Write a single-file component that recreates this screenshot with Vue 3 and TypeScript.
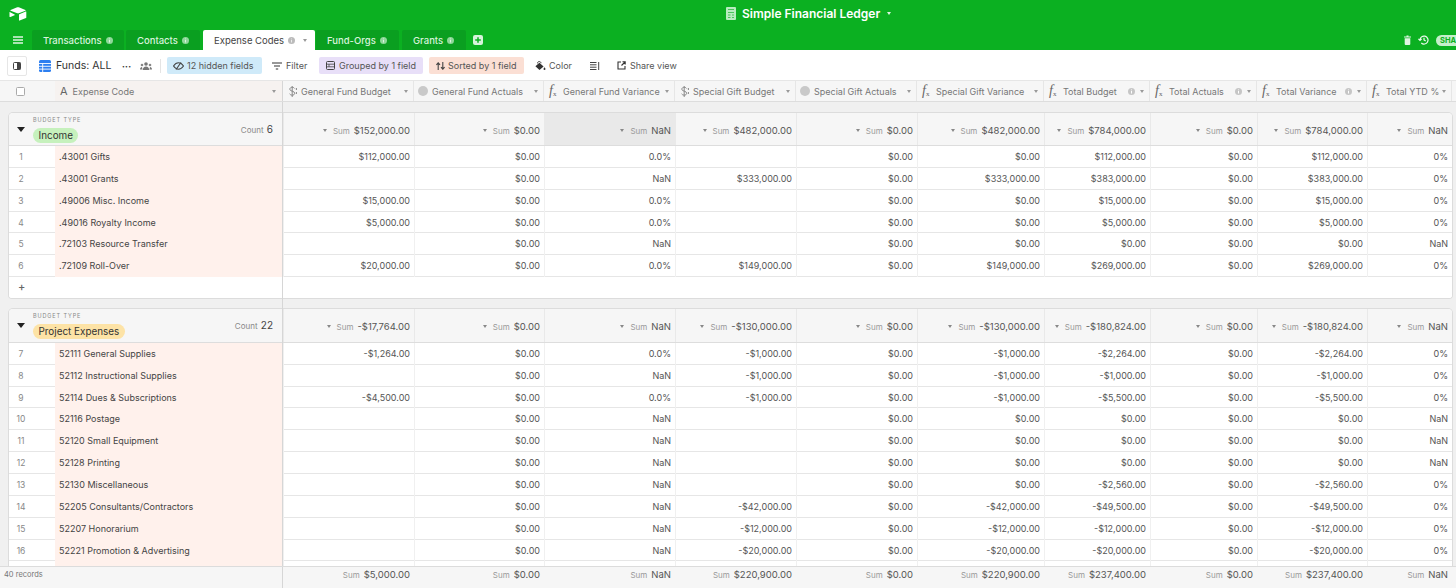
<script setup lang="ts">
type Icon = 'money' | 'circle' | 'fx'
interface Col { name: string; icon: Icon; info?: boolean }
interface Row { n: number; code: string; v: string[] }
interface Group { label: string; tone: string; count: number; sums: string[]; rows: Row[]; add: boolean }

const tabs = [
  { name: 'Transactions', w: 92 },
  { name: 'Contacts', w: 74, gap: 3 },
  { name: 'Expense Codes', w: 112, active: true, gap: 1 },
  { name: 'Fund-Orgs', w: 83, gap: 3 },
  { name: 'Grants', w: 64 }
]

const cols: Col[] = [
  { name: 'General Fund Budget', icon: 'money' },
  { name: 'General Fund Actuals', icon: 'circle' },
  { name: 'General Fund Variance', icon: 'fx' },
  { name: 'Special Gift Budget', icon: 'money' },
  { name: 'Special Gift Actuals', icon: 'circle' },
  { name: 'Special Gift Variance', icon: 'fx' },
  { name: 'Total Budget', icon: 'fx', info: true },
  { name: 'Total Actuals', icon: 'fx', info: true },
  { name: 'Total Variance', icon: 'fx', info: true },
  { name: 'Total YTD %', icon: 'fx' }
]

const Z = '$0.00'
function r(n: number, code: string, a: string, c: string, d: string, e: string, f: string, g: string, h: string): Row {
  return { n, code, v: [a, Z, c, d, Z, e, f, Z, g, h] }
}

const groups: Group[] = [
  {
    label: 'Income', tone: 'green', count: 6, add: true,
    sums: ['$152,000.00', Z, 'NaN', '$482,000.00', Z, '$482,000.00', '$784,000.00', Z, '$784,000.00', 'NaN'],
    rows: [
      r(1, '.43001 Gifts', '$112,000.00', '0.0%', '', Z, '$112,000.00', '$112,000.00', '0%'),
      r(2, '.43001 Grants', '', 'NaN', '$333,000.00', '$333,000.00', '$383,000.00', '$383,000.00', '0%'),
      r(3, '.49006 Misc. Income', '$15,000.00', '0.0%', '', Z, '$15,000.00', '$15,000.00', '0%'),
      r(4, '.49016 Royalty Income', '$5,000.00', '0.0%', '', Z, '$5,000.00', '$5,000.00', '0%'),
      r(5, '.72103 Resource Transfer', '', 'NaN', '', Z, Z, Z, 'NaN'),
      r(6, '.72109 Roll-Over', '$20,000.00', '0.0%', '$149,000.00', '$149,000.00', '$269,000.00', '$269,000.00', '0%')
    ]
  },
  {
    label: 'Project Expenses', tone: 'yellow', count: 22, add: false,
    sums: ['-$17,764.00', Z, 'NaN', '-$130,000.00', Z, '-$130,000.00', '-$180,824.00', Z, '-$180,824.00', 'NaN'],
    rows: [
      r(7, '52111 General Supplies', '-$1,264.00', '0.0%', '-$1,000.00', '-$1,000.00', '-$2,264.00', '-$2,264.00', '0%'),
      r(8, '52112 Instructional Supplies', '', 'NaN', '-$1,000.00', '-$1,000.00', '-$1,000.00', '-$1,000.00', '0%'),
      r(9, '52114 Dues & Subscriptions', '-$4,500.00', '0.0%', '-$1,000.00', '-$1,000.00', '-$5,500.00', '-$5,500.00', '0%'),
      r(10, '52116 Postage', '', 'NaN', '', Z, Z, Z, 'NaN'),
      r(11, '52120 Small Equipment', '', 'NaN', '', Z, Z, Z, 'NaN'),
      r(12, '52128 Printing', '', 'NaN', '', Z, Z, Z, 'NaN'),
      r(13, '52130 Miscellaneous', '', 'NaN', '', Z, '-$2,560.00', '-$2,560.00', '0%'),
      r(14, '52205 Consultants/Contractors', '', 'NaN', '-$42,000.00', '-$42,000.00', '-$49,500.00', '-$49,500.00', '0%'),
      r(15, '52207 Honorarium', '', 'NaN', '-$12,000.00', '-$12,000.00', '-$12,000.00', '-$12,000.00', '0%'),
      r(16, '52221 Promotion & Advertising', '', 'NaN', '-$20,000.00', '-$20,000.00', '-$20,000.00', '-$20,000.00', '0%'),
      { n: 17, code: '', v: ['', '', '', '', '', '', '', '', '', ''] }
    ]
  }
]

const totals = ['$5,000.00', Z, 'NaN', '$220,900.00', Z, '$220,900.00', '$237,400.00', Z, '$237,400.00', 'NaN']
</script>

<template>
  <div class="app">
    <header class="top">
      <div class="top-row">
        <svg class="logo" width="18" height="14" viewBox="0 0 18 14">
          <path d="M8.200.3 1.600 2.900c-.4.200-.4.600 0 .8l6.700 2.600c.5.200 1 .2 1.500 0l6.600-2.600c.4-.2.4-.6 0-.8L9.800.3c-.5-.2-1.100-.2-1.600 0z" fill="#fff" />
          <path d="M10 7.600v5.600c0 .3.300.5.600.4l6.400-2.600c.2-.1.300-.3.300-.4V5c0-.3-.3-.5-.6-.4l-6.400 2.600c-.2.100-.3.200-.3.400z" fill="#fff" />
          <path d="M.7 5 5.600 7.600c.3.100.3.400 0 .6L1.400 10c-.4.200-.9-.1-.9-.5V5.200c0-.2.100-.3.200-.2z" fill="#fff" />
        </svg>
        <div class="title">
          <svg width="10" height="13" viewBox="0 0 10 13">
            <rect width="10" height="13" rx="1" fill="#b8ecc0" />
            <path d="M2 2.500h6M2 5.500h6M2 8h2.500M2 10.500h2.500M6 8h2M6 10.500h2" stroke="#3cbf4e" stroke-width=".9" />
          </svg>
          <span>Simple Financial Ledger</span>
          <i class="caret white"></i>
        </div>
      </div>
      <div class="tab-row">
        <svg class="burger" width="10" height="8" viewBox="0 0 10 8">
          <path d="M0 1h10M0 4h10M0 7h10" stroke="#dff5e2" stroke-width="1.300" />
        </svg>
        <div
          v-for="t in tabs"
          :key="t.name"
          class="tab"
          :class="{ active: t.active }"
          :style="{ width: t.w + 'px', marginRight: (t.gap ?? 2) + 'px' }"
        >
          <span>{{ t.name }}</span>
          <svg class="info" width="7" height="7" viewBox="0 0 7 7">
            <circle cx="3.500" cy="3.500" r="3.500" fill="currentColor" />
            <path d="M3.500 1.500v.8M3.500 3v2.500" stroke="#fff" stroke-opacity=".7" stroke-width="1" />
          </svg>
          <i v-if="t.active" class="caret"></i>
        </div>
        <svg class="plus" width="10" height="10" viewBox="0 0 10 10">
          <rect width="10" height="10" rx="2" fill="#d6f3da" />
          <path d="M5 2.200v5.600M2.200 5h5.600" stroke="#0bb021" stroke-width="1.500" />
        </svg>
        <div class="top-actions">
          <svg width="7" height="10" viewBox="0 0 7 10">
            <path d="M2.500.5h2v1H7v1H0v-1h2.500zM.7 3.300h5.600V9a1 1 0 0 1-1 1H1.700a1 1 0 0 1-1-1z" fill="#dff5e2" />
          </svg>
          <svg class="history" width="11" height="10" viewBox="0 0 11 10">
            <path d="M2 5a4 4 0 1 1 1.300 3M.4 3.800 2 5.400l1.600-1.600M6 2.800V5l1.700 1" fill="none" stroke="#eefaf0" stroke-width="1.200" />
          </svg>
          <span class="share">SHA</span>
        </div>
      </div>
    </header>

    <div class="toolbar">
      <button class="side-btn">
        <svg width="8" height="8" viewBox="0 0 8 8">
          <rect x=".5" y=".5" width="7" height="7" rx="1" fill="none" stroke="#444" />
          <rect x="4" y=".5" width="3.500" height="7" fill="#444" />
        </svg>
      </button>
      <svg class="view-icon" width="12" height="12" viewBox="0 0 12 12">
        <rect width="12" height="12" rx="1.500" fill="#2d7ff0" />
        <path d="M0 3.500h12M0 6.300h12M0 9.100h12M3.700 3.500V12" stroke="#fff" stroke-width=".9" />
      </svg>
      <span class="view-name">Funds: ALL</span>
      <span class="dots">•••</span>
      <svg class="people" width="12" height="8" viewBox="0 0 12 8">
        <circle cx="6" cy="2" r="1.800" fill="#777" />
        <circle cx="2" cy="3" r="1.300" fill="#888" />
        <circle cx="10" cy="3" r="1.300" fill="#888" />
        <path d="M2.800 8c0-2.200 1.300-3.400 3.200-3.400S9.200 5.800 9.200 8zM0 7.500c0-1.500.8-2.500 2-2.500l.5 2.500zM12 7.500c0-1.500-.8-2.500-2-2.500l-.5 2.500z" fill="#777" />
      </svg>
      <span class="divider"></span>
      <span class="pill blue">
        <svg width="11" height="8" viewBox="0 0 11 8">
          <path d="M.5 4C2 1.800 3.600.8 5.500.8S9 1.800 10.500 4C9 6.200 7.400 7.200 5.500 7.200S2 6.200.5 4z" fill="none" stroke="#444" stroke-width="1.100" />
          <path d="M3 7.500 8 .5" stroke="#444" stroke-width="1.100" />
        </svg>
        12 hidden fields
      </span>
      <span class="plain filter">
        <svg width="10" height="8" viewBox="0 0 10 8">
          <path d="M0 1h10M2 4h6M3.800 7h2.400" stroke="#333" stroke-width="1.200" />
        </svg>
        Filter
      </span>
      <span class="pill purple">
        <svg width="9" height="9" viewBox="0 0 9 9">
          <rect x=".5" y=".5" width="8" height="8" rx="1" fill="none" stroke="#444" />
          <path d="M.5 3.200h8M.5 5.800h8M3 3.200v2.600" stroke="#444" stroke-width=".8" />
        </svg>
        Grouped by 1 field
      </span>
      <span class="pill salmon">
        <svg width="9" height="8" viewBox="0 0 9 8">
          <path d="M2.200 8V1M.4 2.800l1.800-2 1.800 2M6.800 0v7M5 5.200l1.800 2 1.800-2" fill="none" stroke="#444" stroke-width="1.100" />
        </svg>
        Sorted by 1 field
      </span>
      <span class="plain color">
        <svg width="11" height="10" viewBox="0 0 11 10">
          <path d="M2.500 2.400C2.500 1.200 3.200.5 4.200.5S6 1.200 6 2.200" fill="none" stroke="#333" stroke-width=".9" />
          <path d="M4.400 1.800 8.600 5.600 4.500 9 .4 5.300zM9.500 6.200c-.6.800-1 1.300-1 1.800a1 1 0 0 0 2 0c0-.5-.4-1-1-1.800z" fill="#333" />
        </svg>
        Color
      </span>
      <svg class="density" width="10" height="8" viewBox="0 0 10 8">
        <path d="M0 .5h6.500M0 2.800h6.500M0 5.200h6.500M0 7.500h6.500M8.700 0v8" stroke="#444" stroke-width="1" />
      </svg>
      <span class="plain share-view">
        <svg width="9" height="9" viewBox="0 0 9 9">
          <path d="M4 1H1v7h7V5M4.500 4.500 8 1M5.500 .8H8.200V3.500" fill="none" stroke="#333" stroke-width="1.100" />
        </svg>
        Share view
      </span>
    </div>

    <div class="cols-head grid-outer">
      <div class="head-main">
        <span class="check"></span>
        <span class="head-a">A</span>
        <span>Expense Code</span>
        <i class="caret"></i>
      </div>
      <div v-for="c in cols" :key="c.name" class="head-cell">
        <span v-if="c.icon === 'fx'" class="fx">f<sub>x</sub></span>
        <svg v-else-if="c.icon === 'money'" class="money" width="8" height="11" viewBox="0 0 8 11">
          <path d="M5.600 2.500C5.200 1.700 4.400 1.300 3.200 1.300 1.900 1.300.8 2 .8 3.200c0 2.500 4.900 1.500 4.900 4 0 1.200-1.100 2-2.500 2-1.200 0-2-.5-2.600-1.400M3.200 0v11" fill="none" stroke="#888" stroke-width="1" />
          <path d="M7.400 2v2M7.400 6v2" stroke="#888" stroke-width="1" />
        </svg>
        <span v-else class="rollup"></span>
        <span class="head-name">{{ c.name }}</span>
        <svg v-if="c.info" class="info head-info" width="7" height="7" viewBox="0 0 7 7">
          <circle cx="3.500" cy="3.500" r="3.500" fill="currentColor" />
          <path d="M3.500 1.500v.8M3.500 3v2.500" stroke="#fff" stroke-width="1" />
        </svg>
        <i class="caret"></i>
      </div>
    </div>

    <main class="data">
      <span class="freeze-line"></span>
      <section v-for="g in groups" :key="g.label" class="card">
        <div class="card-grid group-head">
          <div class="group-main">
            <i class="group-arrow"></i>
            <div class="group-label">
              <small>BUDGET TYPE</small>
              <span class="tag" :class="g.tone">{{ g.label }}</span>
            </div>
            <span class="count">Count <b>{{ g.count }}</b></span>
          </div>
          <div v-for="(s, i) in g.sums" :key="i" class="sum-cell" :class="{ hot: i === 2 && g.tone === 'green' }">
            <i class="caret"></i>
            <span class="sum">Sum</span>
            <span class="sum-val">{{ s }}</span>
          </div>
        </div>
        <div v-for="row in g.rows" :key="row.n" class="card-grid row">
          <div class="main-cell">
            <span class="num">{{ row.code ? row.n : '' }}</span>
            <span class="code">{{ row.code }}</span>
          </div>
          <div v-for="(v, i) in row.v" :key="i" class="val">{{ v }}</div>
        </div>
        <div v-if="g.add" class="card-grid add-row">
          <span class="add">+</span>
        </div>
      </section>
    </main>

    <footer class="foot grid-outer">
      <div class="records">40 records</div>
      <div v-for="(t, i) in totals" :key="i" class="foot-cell">
        <span class="sum">Sum</span>
        <span class="sum-val">{{ t }}</span>
      </div>
    </footer>
  </div>
</template>

<style>
html, body { margin: 0; overflow: hidden; }
</style>

<style scoped>
.app {
  width: 1456px;
  height: 588px;
  display: flex;
  flex-direction: column;
  overflow: hidden;
  font-family: Inter, "Liberation Sans", sans-serif;
  font-size: 9px;
  color: #444;
  background: #fff;
}
.caret {
  display: inline-block;
  width: 0;
  height: 0;
  border-left: 2.5px solid transparent;
  border-right: 2.5px solid transparent;
  border-top: 3px solid #999;
  flex: none;
}
.caret.white { border-top-color: #dff5e2; }

.top { height: 50px; flex: none; background: #0bb021; display: flex; flex-direction: column; }
.top-row { height: 30px; display: flex; align-items: center; padding-left: 9px; padding-bottom: 3px; box-sizing: border-box; }
.logo { flex: none; }
.title { margin-left: 699px; display: flex; align-items: center; gap: 6px; color: #fff; font-size: 12px; font-weight: 600; }
.title .caret { margin-left: 1px; }
.tab-row { height: 20px; display: flex; align-items: stretch; color: #e4f7e7; }
.burger { align-self: center; margin-left: 13px; margin-right: 9px; flex: none; }
.tab {
  box-sizing: border-box;
  display: flex;
  align-items: center;
  gap: 4px;
  padding-left: 11px;
  font-size: 9.500px;
  font-weight: 500;
  background: #0a9f20;
  border-radius: 2px 2px 0 0;
  color: #d9f3dd;
}
.tab .info { color: #8fd89a; }
.tab.active { background: #fff; color: #444; font-weight: 400; }
.tab.active .info { color: #bbb; }
.tab.active .caret { margin-left: 4px; }
.plus { align-self: center; margin-left: 5px; flex: none; }
.top-actions { margin-left: auto; display: flex; align-items: center; width: 52px; flex: none; overflow: hidden; }
.top-actions svg { flex: none; }
.top-actions .history { margin-left: 7px; }
.share {
  margin-left: 7px;
  flex: none;
  width: 20px;
  height: 11px;
  line-height: 11px;
  border-radius: 5.500px 0 0 5.500px;
  padding-left: 4px;
  box-sizing: border-box;
  background: #c4efcb;
  color: #0bb021;
  font-size: 7.500px;
  font-weight: 700;
}

.toolbar { height: 31px; flex: none; display: flex; align-items: center; box-sizing: border-box; padding-left: 7px; background: #fff; }
.side-btn {
  width: 20px; height: 20px; padding: 0; display: flex; align-items: center; justify-content: center;
  background: #fff; border: 1px solid #e6e6e6; border-radius: 2px; flex: none;
}
.view-icon { margin-left: 12px; flex: none; }
.view-name { margin-left: 5px; width: 66px; font-size: 10.500px; color: #333; flex: none; }
.dots { font-size: 5px; letter-spacing: .3px; color: #333; width: 13px; flex: none; }
.people { margin-left: 5px; flex: none; }
.divider { width: 1px; height: 14px; background: #e4e4e4; margin: 0 6px 0 8px; flex: none; }
.pill, .plain { display: flex; align-items: center; gap: 4px; font-size: 9px; color: #555; flex: none; height: 17px; box-sizing: border-box; }
.pill { border-radius: 2px; padding: 0 5px; }
.blue { background: #cfeaf9; width: 95px; padding-left: 6px; gap: 3px; }
.filter { margin-left: 10px; width: 47px; }
.purple { background: #e8dff8; width: 104px; padding-left: 7px; }
.salmon { background: #fbdfd4; width: 95px; margin-left: 6px; padding-left: 7px; gap: 3px; }
.color { margin-left: 11px; gap: 3px; }
.density { margin-left: 18px; flex: none; }
.share-view { margin-left: 17px; }

.grid-outer {
  display: grid;
  grid-template-columns: 283px 131px 130px 131px 121px 121px 127px 106px 107px 110px 85px 4px;
}
.cols-head { flex: none; background: #f6f6f6; border-top: 1px solid #e6e6e6; border-bottom: 1px solid #ddd; box-sizing: border-box; height: 22px; margin-top: -1px; }
.head-main {
  display: flex; align-items: center; position: relative; box-sizing: border-box; padding-right: 6px;
  border-right: 1px solid #d6d6d6; background: linear-gradient(90deg, #f6f6f6 55px, #f6f2f0 55px);
  color: #777;
}
.check { width: 7px; height: 7px; border: 1px solid #aaa; border-radius: 1.500px; background: #fff; margin-left: 16px; flex: none; }
.head-a { font-size: 11px; margin-left: 35px; margin-right: 5px; color: #666; }
.head-main .caret { margin-left: auto; }
.head-cell {
  display: flex; align-items: center; box-sizing: border-box; padding: 0 5px 0 4px;
  border-right: 1px solid #e6e6e6; color: #777; min-width: 0; white-space: nowrap; overflow: hidden;
}
.head-name { margin-left: 4px; }
.head-cell > .caret { margin-left: auto; }
.head-info { color: #c6c6c6; margin-left: auto; }
.head-info + .caret { margin-left: 5px; }
.fx { font-family: "Liberation Serif", serif; font-style: italic; font-size: 14px; color: #666; line-height: 1; width: 10px; flex: none; margin-left: 1px; }
.fx sub { font-size: 7px; vertical-align: -1px; font-style: normal; line-height: 0; }
.money { flex: none; margin-left: 2px; }
.rollup { width: 10px; height: 10px; border-radius: 50%; background: #c9c9c9; flex: none; }

.data { flex: 1; min-height: 0; overflow: hidden; background: #f0f0f0; position: relative; padding: 11px 4px 0 9px; }
.freeze-line { position: absolute; left: 282px; top: 0; bottom: 0; width: 1px; background: #d6d6d6; z-index: 2; }
.card { box-shadow: 0 0 0 1px #dcdcdc; border-radius: 4px 4px 3px 3px; margin-bottom: 11px; background: #fff; overflow: hidden; }
.card-grid {
  display: grid;
  grid-template-columns: 274px 131px 130px 131px 121px 121px 127px 106px 107px 110px 85px;
}
.group-head { height: 33px; background: #f6f6f6; border-bottom: 1px solid #ddd; box-sizing: border-box; }
.card:nth-of-type(2) .group-head { height: 34px; }
.group-main { display: flex; align-items: center; position: relative; padding-left: 8px; padding-right: 10px; }
.group-arrow {
  width: 0; height: 0; flex: none;
  border-left: 4px solid transparent; border-right: 4px solid transparent; border-top: 5px solid #222;
}
.group-label { display: flex; flex-direction: column; align-items: flex-start; margin-left: 8px; align-self: flex-start; padding-top: 3px; }
.group-label small { font-size: 5.500px; letter-spacing: .9px; color: #888; line-height: 8px; margin-bottom: 4px; }
.tag { height: 15px; line-height: 15px; border-radius: 7.500px; padding: 0 5.500px; font-size: 9.900px; color: #333; white-space: nowrap; }
.tag.green { background: #c6f1bd; }
.tag.yellow { background: #fde3a6; }
.count { margin-left: auto; color: #888; font-size: 8px; margin-bottom: 1px; }
.count b { font-weight: 400; color: #444; font-size: 10px; margin-left: 1px; }
.sum-cell {
  display: flex; align-items: center; justify-content: flex-end; gap: 4px; padding-right: 4px;
  border-left: 1px solid #e9e9e9; box-sizing: border-box; padding-top: 3px;
}
.sum-cell.hot { background: #e9e9e9; }
.sum { font-size: 8px; color: #999; }
.sum-val { font-size: 9.500px; color: #555; }
.sum-cell .caret { border-top-color: #888; margin-right: 2px; }
.row { height: 21.850px; box-sizing: border-box; border-bottom: 1px solid #e6e6e6; background: #fff; }
.main-cell { display: flex; align-items: stretch; }
.num { width: 46px; box-sizing: border-box; padding-right: 22px; padding-top: 1px; text-align: center; color: #888; font-size: 8.500px; line-height: 21px; flex: none; }
.code { flex: 1; background: #fff1ec; padding-left: 4px; line-height: 21px; font-size: 9px; color: #444; }
.val { text-align: right; padding-right: 4px; line-height: 21px; font-size: 9px; border-left: 1px solid #f0f0f0; color: #555; box-sizing: border-box; }
.add-row { height: 20.900px; background: #fff; align-items: center; }
.add { padding-left: 9px; color: #666; font-size: 11px; line-height: 1; font-weight: 500; }

.foot { height: 22px; flex: none; background: #f6f6f6; border-top: 1px solid #dcdcdc; box-sizing: border-box; position: relative; z-index: 3; padding-top: 2px; }
.records { padding-left: 4px; font-size: 7.500px; color: #777; line-height: 11px; border-right: 1px solid #d6d6d6; margin-top: -2px; padding-top: 2px; }
.foot-cell { display: flex; justify-content: flex-end; gap: 4px; padding-right: 4px; line-height: 12px; align-items: flex-start; }
.foot-cell .sum { line-height: 12px; }
</style>
